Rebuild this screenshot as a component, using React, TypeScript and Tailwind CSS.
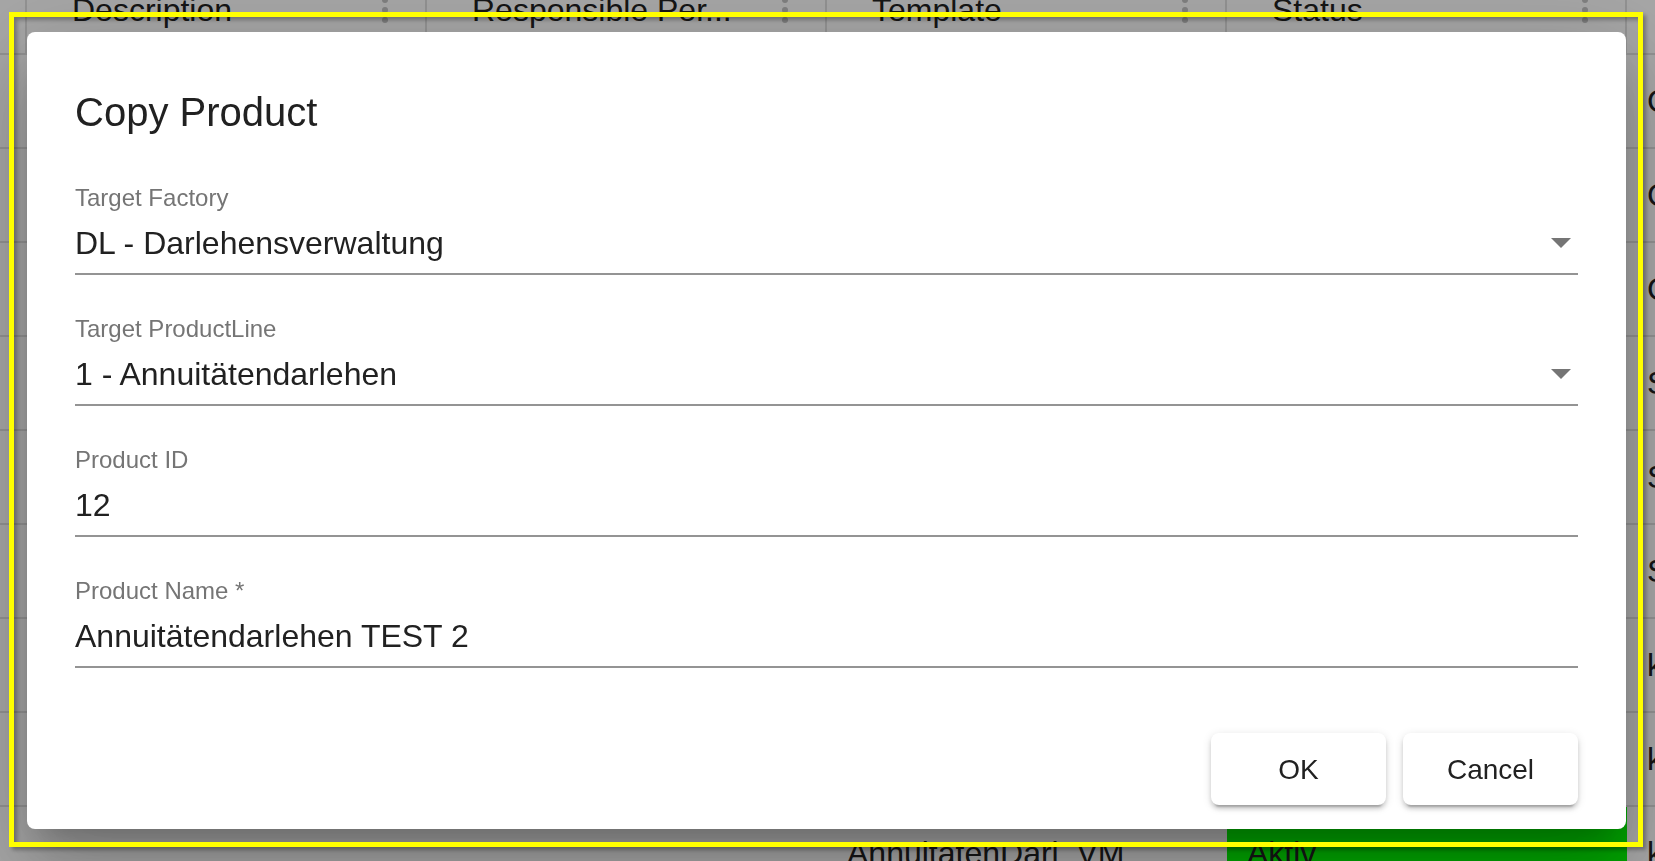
const columns = ["Description", "Responsible Person", "Template", "Status"];

const lastColumn = ["Copy", "Copy", "Copy", "Save", "Save", "Save", "kein", "kein", "kein"];

type Field = {
    label: string;
    value: string;
    select?: boolean;
};

const fields: Field[] = [
    { label: "Target Factory", value: "DL - Darlehensverwaltung", select: true },
    { label: "Target ProductLine", value: "1 - Annuitätendarlehen", select: true },
    { label: "Product ID", value: "12" },
    { label: "Product Name *", value: "Annuitätendarlehen TEST 2" },
];

const Kebab = () => (
    <div className="flex flex-col gap-[4px]">
        <span className="h-[6px] w-[6px] rounded-full bg-[#c4c4c4]" />
        <span className="h-[6px] w-[6px] rounded-full bg-[#c4c4c4]" />
        <span className="h-[6px] w-[6px] rounded-full bg-[#c4c4c4]" />
    </div>
);

const Table = () => (
    <div className="-mt-[33px] flex flex-col text-[32px] text-[#212121]">
        <div className="flex h-[88px] shrink-0 border-b-2 border-[#e0e0e0]">
            <div className="w-[27px] shrink-0 border-r-2 border-[#e0e0e0]" />
            {columns.map((col) => (
                <div
                    key={col}
                    className="flex w-[400px] shrink-0 items-center justify-between border-r-2 border-[#e0e0e0] pl-[45px] pr-[37px]"
                >
                    <span className="truncate pr-4 leading-[36px]">
                        {col === "Responsible Person" ? "Responsible Per..." : col}
                    </span>
                    <Kebab />
                </div>
            ))}
            <div className="flex-1" />
        </div>
        {lastColumn.map((text, i) => (
            <div key={i} className="flex h-[94px] shrink-0 border-b-2 border-[#e0e0e0]">
                <div className="w-[27px] shrink-0" />
                <div className="w-[400px] shrink-0" />
                <div className="w-[400px] shrink-0" />
                <div className="flex w-[400px] shrink-0 items-center pl-[20px]">
                    {i === 8 ? "AnnuitätenDarl_VM" : ""}
                </div>
                <div
                    className={
                        i === 8
                            ? "flex w-[400px] shrink-0 items-center bg-[#00ff00] pl-[20px]"
                            : "w-[400px] shrink-0"
                    }
                >
                    {i === 8 ? "Aktiv" : ""}
                </div>
                <div className="flex flex-1 items-center pl-[20px]">{text}</div>
            </div>
        ))}
    </div>
);

const ArrowDrop = () => (
    <svg width="20" height="10" viewBox="0 0 10 5" className="mr-[7px] shrink-0">
        <path d="M0 0 L5 5 L10 0 Z" fill="#757575" />
    </svg>
);

export default function App() {
    return (
        <div className="relative h-screen w-screen overflow-hidden bg-white font-['Liberation_Sans',Arial,sans-serif]">
            <Table />

            {/* backdrop */}
            <div className="fixed inset-0 bg-black/35" />

            {/* dialog */}
            <div className="fixed inset-0 flex items-start pl-[27px] pt-[32px]">
                <div className="flex w-[1599px] flex-col rounded-[8px] bg-white px-[48px] pb-[24px] shadow-[0_22px_30px_-14px_rgba(0,0,0,0.2),0_48px_76px_6px_rgba(0,0,0,0.14),0_18px_92px_16px_rgba(0,0,0,0.12)]">
                    <h2 className="pt-[48px] text-[40px] leading-[64px] font-normal text-[#212121]">
                        Copy Product
                    </h2>

                    <div className="mt-[42px] flex flex-col gap-[42px]">
                        {fields.map((field) => (
                            <div key={field.label} className="flex flex-col">
                                <label className="text-[24px] leading-[24px] text-[#757575]">
                                    {field.label}
                                </label>
                                <div className="mt-px flex h-[64px] items-center border-b-2 border-[#949494] pt-[2px]">
                                    <span className="flex-1 text-[32px] leading-[38px] text-[#212121]">
                                        {field.value}
                                    </span>
                                    {field.select && <ArrowDrop />}
                                </div>
                            </div>
                        ))}
                    </div>

                    <div className="mt-[65px] flex justify-end gap-[17px]">
                        {["OK", "Cancel"].map((label) => (
                            <button
                                key={label}
                                className="flex h-[72px] w-[175px] items-center justify-center rounded-[8px] bg-white pt-[2px] text-[28px] text-[#212121] shadow-[0_6px_2px_-4px_rgba(0,0,0,0.2),0_4px_4px_0_rgba(0,0,0,0.14),0_2px_10px_0_rgba(0,0,0,0.12)]"
                            >
                                {label}
                            </button>
                        ))}
                    </div>
                </div>
            </div>

            {/* annotation frame */}
            <div className="pointer-events-none fixed left-[9px] top-[12px] h-[835px] w-[1634px] border-[5px] border-[#ffff00] shadow-[3px_3px_4px_rgba(0,0,0,0.3),inset_3px_3px_4px_rgba(0,0,0,0.3)]" />
        </div>
    );
}
